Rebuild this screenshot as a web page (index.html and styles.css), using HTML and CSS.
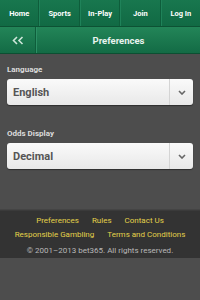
FILE: index.html
```html
<!DOCTYPE html>
<html>
<head>
<meta charset="utf-8">
<link rel="stylesheet" href="styles.css">
</head>
<body>
<nav class="topnav">
  <a class="tab">Home</a>
  <a class="tab">Sports</a>
  <a class="tab">In-Play</a>
  <a class="tab">Join</a>
  <a class="tab">Log In</a>
</nav>
<header class="titlebar">
  <div class="back">
    <svg width="12" height="9" viewBox="0 0 12 9"><path d="M5 1 L1.5 4.5 L5 8 M10.5 1 L7 4.5 L10.5 8" fill="none" stroke="#cfe6da" stroke-width="1.6"/></svg>
  </div>
  <div class="title">Preferences</div>
</header>
<main class="content">
  <div class="field">
    <div class="label">Language</div>
    <div class="select"><span class="value">English</span><span class="arrow"><svg width="8" height="5" viewBox="0 0 8 5"><path d="M1 1 L4 4 L7 1" fill="none" stroke="#666" stroke-width="1.6"/></svg></span></div>
  </div>
  <div class="field">
    <div class="label">Odds Display</div>
    <div class="select"><span class="value">Decimal</span><span class="arrow"><svg width="8" height="5" viewBox="0 0 8 5"><path d="M1 1 L4 4 L7 1" fill="none" stroke="#666" stroke-width="1.6"/></svg></span></div>
  </div>
</main>
<footer class="footer">
  <div class="links"><a>Preferences</a><a>Rules</a><a>Contact Us</a></div>
  <div class="links"><a>Responsible Gambling</a><a>Terms and Conditions</a></div>
  <div class="copy">© 2001–2013 bet365. All rights reserved.</div>
</footer>
</body>
</html>
```
FILE: styles.css
```css
html, body { margin: 0; padding: 0; }
body {
  background: #4d4d4d;
  font-family: Roboto, "Liberation Sans", sans-serif;
  width: 200px;
  height: 300px;
  overflow: hidden;
}
.topnav {
  display: flex;
  height: 26px;
  background: linear-gradient(#18774e, #116a44);
  border-bottom: 1px solid #0d5234;
}
.tab {
  flex: 1;
  display: flex;
  align-items: center;
  justify-content: center;
  color: #fff;
  font-size: 7.5px;
  font-weight: bold;
  border-right: 1px solid #0e5d3b;
  border-left: 1px solid #1f8259;
}
.tab:first-child { border-left: none; }
.tab:last-child { border-right: none; }
.titlebar {
  display: flex;
  height: 26px;
  background: linear-gradient(#238558, #136b45);
  border-bottom: 1px solid #0c4f31;
}
.back {
  width: 35px;
  display: flex;
  align-items: center;
  justify-content: center;
  border-right: 1px solid #0e5d3b;
}
.title {
  flex: 1;
  display: flex;
  align-items: center;
  justify-content: center;
  color: #e8f3ee;
  font-size: 9.5px;
  font-weight: bold;
  border-left: 1px solid #2c9065;
}
.content {
  padding: 10px 7px 0;
  display: flex;
  flex-direction: column;
  gap: 23px;
  border-bottom: 1px solid #444;
  height: 156px;
  box-sizing: border-box;
}
.label {
  color: #dcdcdc;
  font-size: 8px;
  font-weight: bold;
  margin-bottom: 4px;
  line-height: 11px;
}
.select {
  display: flex;
  height: 26px;
  background: linear-gradient(#fafafa, #e8e8e8);
  border-radius: 3px;
  box-shadow: 0 1px 1px rgba(0,0,0,0.4);
}
.value {
  flex: 1;
  display: flex;
  align-items: center;
  padding-left: 6px;
  color: #555;
  font-size: 11px;
  font-weight: bold;
}
.arrow {
  width: 23px;
  display: flex;
  align-items: center;
  justify-content: center;
  border-left: 1px solid #d4d4d4;
}
.footer {
  background: #333;
  height: 48px;
  display: flex;
  flex-direction: column;
  align-items: center;
  padding-top: 3px;
  box-sizing: border-box;
  border-top: 1px solid #3a3a3a;
}
.links {
  display: flex;
  gap: 13px;
  color: #e3d24a;
  font-size: 8px;
  line-height: 14px;
}
.copy {
  color: #b8b8b8;
  font-size: 8px;
  line-height: 14px;
  margin-top: 2px;
}
```
